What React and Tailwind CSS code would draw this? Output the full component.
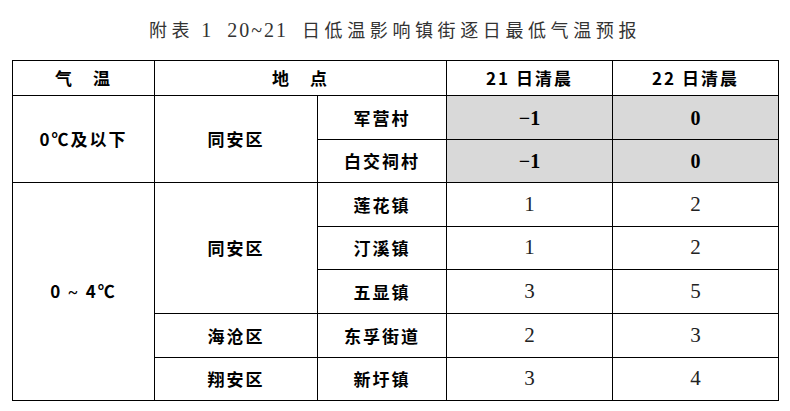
import React from "react";

const cjk = "font-['Noto_Sans_CJK_SC',sans-serif]";
const num = "font-['Liberation_Serif','Noto_Sans_CJK_SC',serif]";

const rows = [
    { town: "莲花镇", d21: "1", d22: "2" },
    { town: "汀溪镇", d21: "1", d22: "2" },
    { town: "五显镇", d21: "3", d22: "5" },
];

export default function App() {
    const cell = "border border-black text-center align-middle p-0";
    const name = `${cell} ${cjk} font-bold text-[17px] tracking-[2px] text-black`;
    const val = `${cell} ${num} text-[21px] text-[#222]`;
    const hot = `${cell} ${num} font-bold text-[20px] bg-[#d9d9d9] text-black`;

    return (
        <div className="w-[790px] h-[411px] bg-white overflow-hidden">
            <h1 className={`h-[60px] pt-[16px] text-center text-[18px] leading-[26px] tracking-[4.6px] text-[#333] font-normal whitespace-pre ${cjk}`}>
                附表<span className={`${num} text-[20px] tracking-[2px]`}>{" 1  20~21  "}</span>日低温影响镇街逐日最低气温预报
            </h1>
            <table className="ml-[12px] w-[766px] border-collapse table-fixed">
                <colgroup>
                    <col className="w-[142px]" />
                    <col className="w-[163px]" />
                    <col className="w-[129px]" />
                    <col className="w-[166px]" />
                    <col className="w-[166px]" />
                </colgroup>
                <tbody>
                    <tr className="h-[35px]">
                        <td className={name}>气　温</td>
                        <td className={name} colSpan={2}>地　点</td>
                        <td className={name}>21 日清晨</td>
                        <td className={name}>22 日清晨</td>
                    </tr>
                    <tr className="h-[44px]">
                        <td className={name} rowSpan={2}>0℃及以下</td>
                        <td className={name} rowSpan={2}>同安区</td>
                        <td className={name}>军营村</td>
                        <td className={hot}>−1</td>
                        <td className={hot}>0</td>
                    </tr>
                    <tr className="h-[43px]">
                        <td className={name}>白交祠村</td>
                        <td className={hot}>−1</td>
                        <td className={hot}>0</td>
                    </tr>
                    {rows.map((r, i) => (
                        <tr key={r.town} className={i === 1 ? "h-[43px]" : "h-[44px]"}>
                            {i === 0 && (
                                <>
                                    <td className={name} rowSpan={5}>
                                        0<span className={num}> ~ </span>4℃
                                    </td>
                                    <td className={name} rowSpan={3}>同安区</td>
                                </>
                            )}
                            <td className={name}>{r.town}</td>
                            <td className={val}>{r.d21}</td>
                            <td className={val}>{r.d22}</td>
                        </tr>
                    ))}
                    <tr className="h-[44px]">
                        <td className={name}>海沧区</td>
                        <td className={name}>东孚街道</td>
                        <td className={val}>2</td>
                        <td className={val}>3</td>
                    </tr>
                    <tr className="h-[43px]">
                        <td className={name}>翔安区</td>
                        <td className={name}>新圩镇</td>
                        <td className={val}>3</td>
                        <td className={val}>4</td>
                    </tr>
                </tbody>
            </table>
        </div>
    );
}
